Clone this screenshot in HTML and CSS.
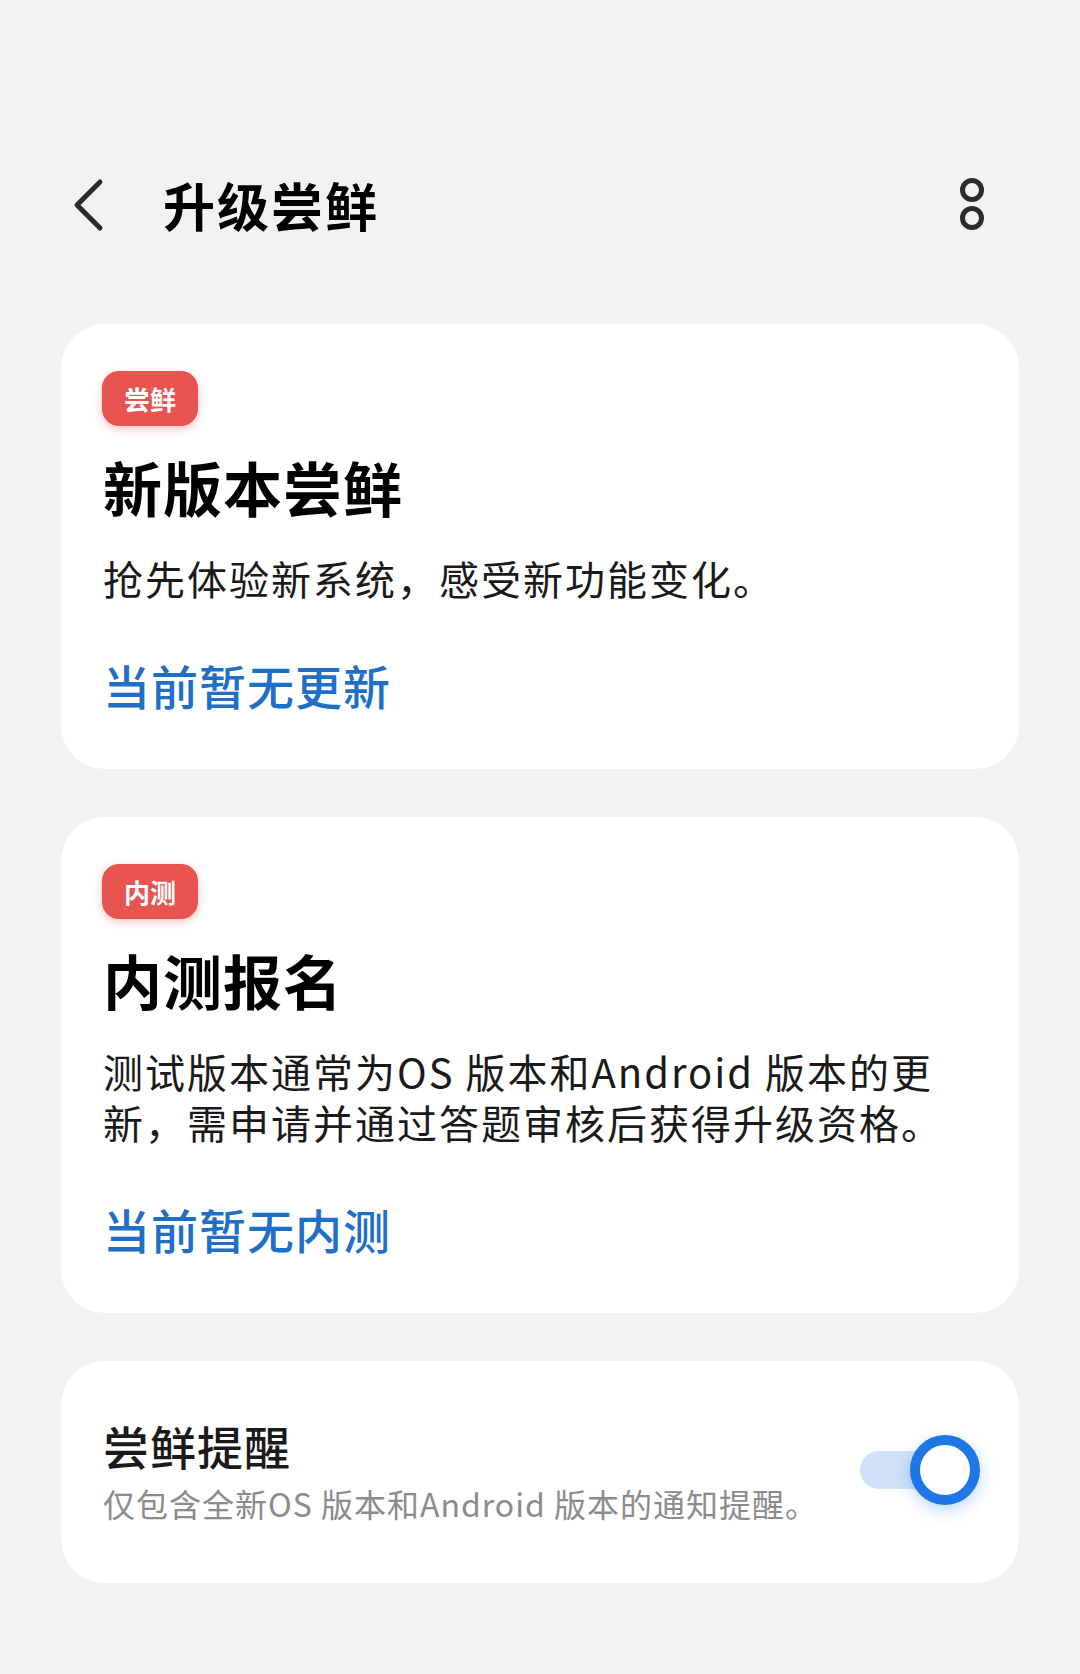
FILE: index.html
```html
<!DOCTYPE html>
<html lang="zh-CN">
<head>
    <meta charset="UTF-8">
    <meta name="viewport" content="width=device-width, initial-scale=1.0">
    <title>升级尝鲜</title>
    <link rel="stylesheet" href="styles.css">
</head>
<body>

    <div class="header">
        <svg class="back" width="32" height="54" viewBox="0 0 32 54">
            <path d="M28 4 L5 27 L28 50" fill="none" stroke="#2b2b2b" stroke-width="5" stroke-linecap="round" stroke-linejoin="round"/>
        </svg>
        <h1>升级尝鲜</h1>
        <svg class="more" width="30" height="58" viewBox="0 0 30 58">
            <circle cx="15" cy="14" r="9.5" fill="none" stroke="#2b2b2b" stroke-width="5"/>
            <circle cx="15" cy="42" r="9.5" fill="none" stroke="#2b2b2b" stroke-width="5"/>
        </svg>
    </div>

    <div class="content">
        <div class="card">
            <span class="badge">尝鲜</span>
            <h2>新版本尝鲜</h2>
            <p class="desc">抢先体验新系统，感受新功能变化。</p>
            <p class="status">当前暂无更新</p>
        </div>

        <div class="card">
            <span class="badge">内测</span>
            <h2>内测报名</h2>
            <p class="desc">测试版本通常为OS 版本和Android 版本的更<br>新，需申请并通过答题审核后获得升级资格。</p>
            <p class="status">当前暂无内测</p>
        </div>

        <div class="card setting">
            <div class="setting-text">
                <p class="setting-title">尝鲜提醒</p>
                <p class="setting-sub">仅包含全新OS 版本和Android 版本的通知提醒。</p>
            </div>
            <div class="switch">
                <div class="track"></div>
                <div class="knob"></div>
            </div>
        </div>
    </div>

</body>
</html>
```

FILE: styles.css
```css
body {
    margin: 0;
    background-color: #f2f2f4;
    font-family: "Noto Sans CJK SC", "Noto Sans", sans-serif;
    color: #111;
}
p, h1, h2 {
    margin: 0;
}
.header {
    display: flex;
    align-items: center;
    height: 100px;
    margin-top: 155px;
    padding: 0 93px 0 72px;
}
.header h1 {
    margin-left: 59px;
    font-size: 52px;
    font-weight: 700;
    line-height: 64px;
    letter-spacing: 2px;
    color: #000;
}
.header .more {
    margin-left: auto;
}
.content {
    display: flex;
    flex-direction: column;
    gap: 48px;
    margin-top: 69px;
    padding: 0 61px;
}
.card {
    background-color: #fff;
    border-radius: 44px;
    padding: 47px 40px 55px 42px;
}
.badge {
    display: inline-block;
    height: 55px;
    line-height: 55px;
    padding: 0 22px;
    margin-left: -1px;
    border-radius: 17px;
    background-color: #e8544f;
    color: #fff;
    font-size: 26px;
    font-weight: 700;
    box-shadow: 0 3px 9px rgba(232, 84, 79, 0.35);
    vertical-align: top;
}
.card h2 {
    margin-top: 25px;
    font-size: 59px;
    font-weight: 700;
    line-height: 72px;
    letter-spacing: 1px;
    color: #000;
}
.desc {
    margin-top: 30px;
    font-size: 40px;
    line-height: 51px;
    letter-spacing: 2px;
    color: #1a1a1a;
}
.status {
    margin-top: 52px;
    font-size: 47px;
    font-weight: 500;
    line-height: 58px;
    letter-spacing: 1px;
    color: #1f6fc8;
}
.setting {
    display: flex;
    align-items: center;
    padding: 56px 39px 60px 42px;
}
.setting-text {
    flex: 1;
}
.setting-title {
    font-size: 46px;
    font-weight: 500;
    line-height: 56px;
    letter-spacing: 1px;
    color: #1a1a1a;
}
.setting-sub {
    margin-top: 10px;
    font-size: 32px;
    line-height: 40px;
    letter-spacing: 1px;
    color: #8b8b8b;
}
.switch {
    position: relative;
    width: 120px;
    height: 70px;
}
.switch .track {
    position: absolute;
    left: 0;
    top: 16px;
    width: 90px;
    height: 38px;
    border-radius: 19px;
    background-color: #cfe2f8;
}
.switch .knob {
    position: absolute;
    right: 0;
    top: 0;
    width: 50px;
    height: 50px;
    border: 10px solid #1e77e4;
    border-radius: 50%;
    background-color: #fff;
    box-shadow: 0 5px 16px rgba(30, 119, 228, 0.3);
}
```
